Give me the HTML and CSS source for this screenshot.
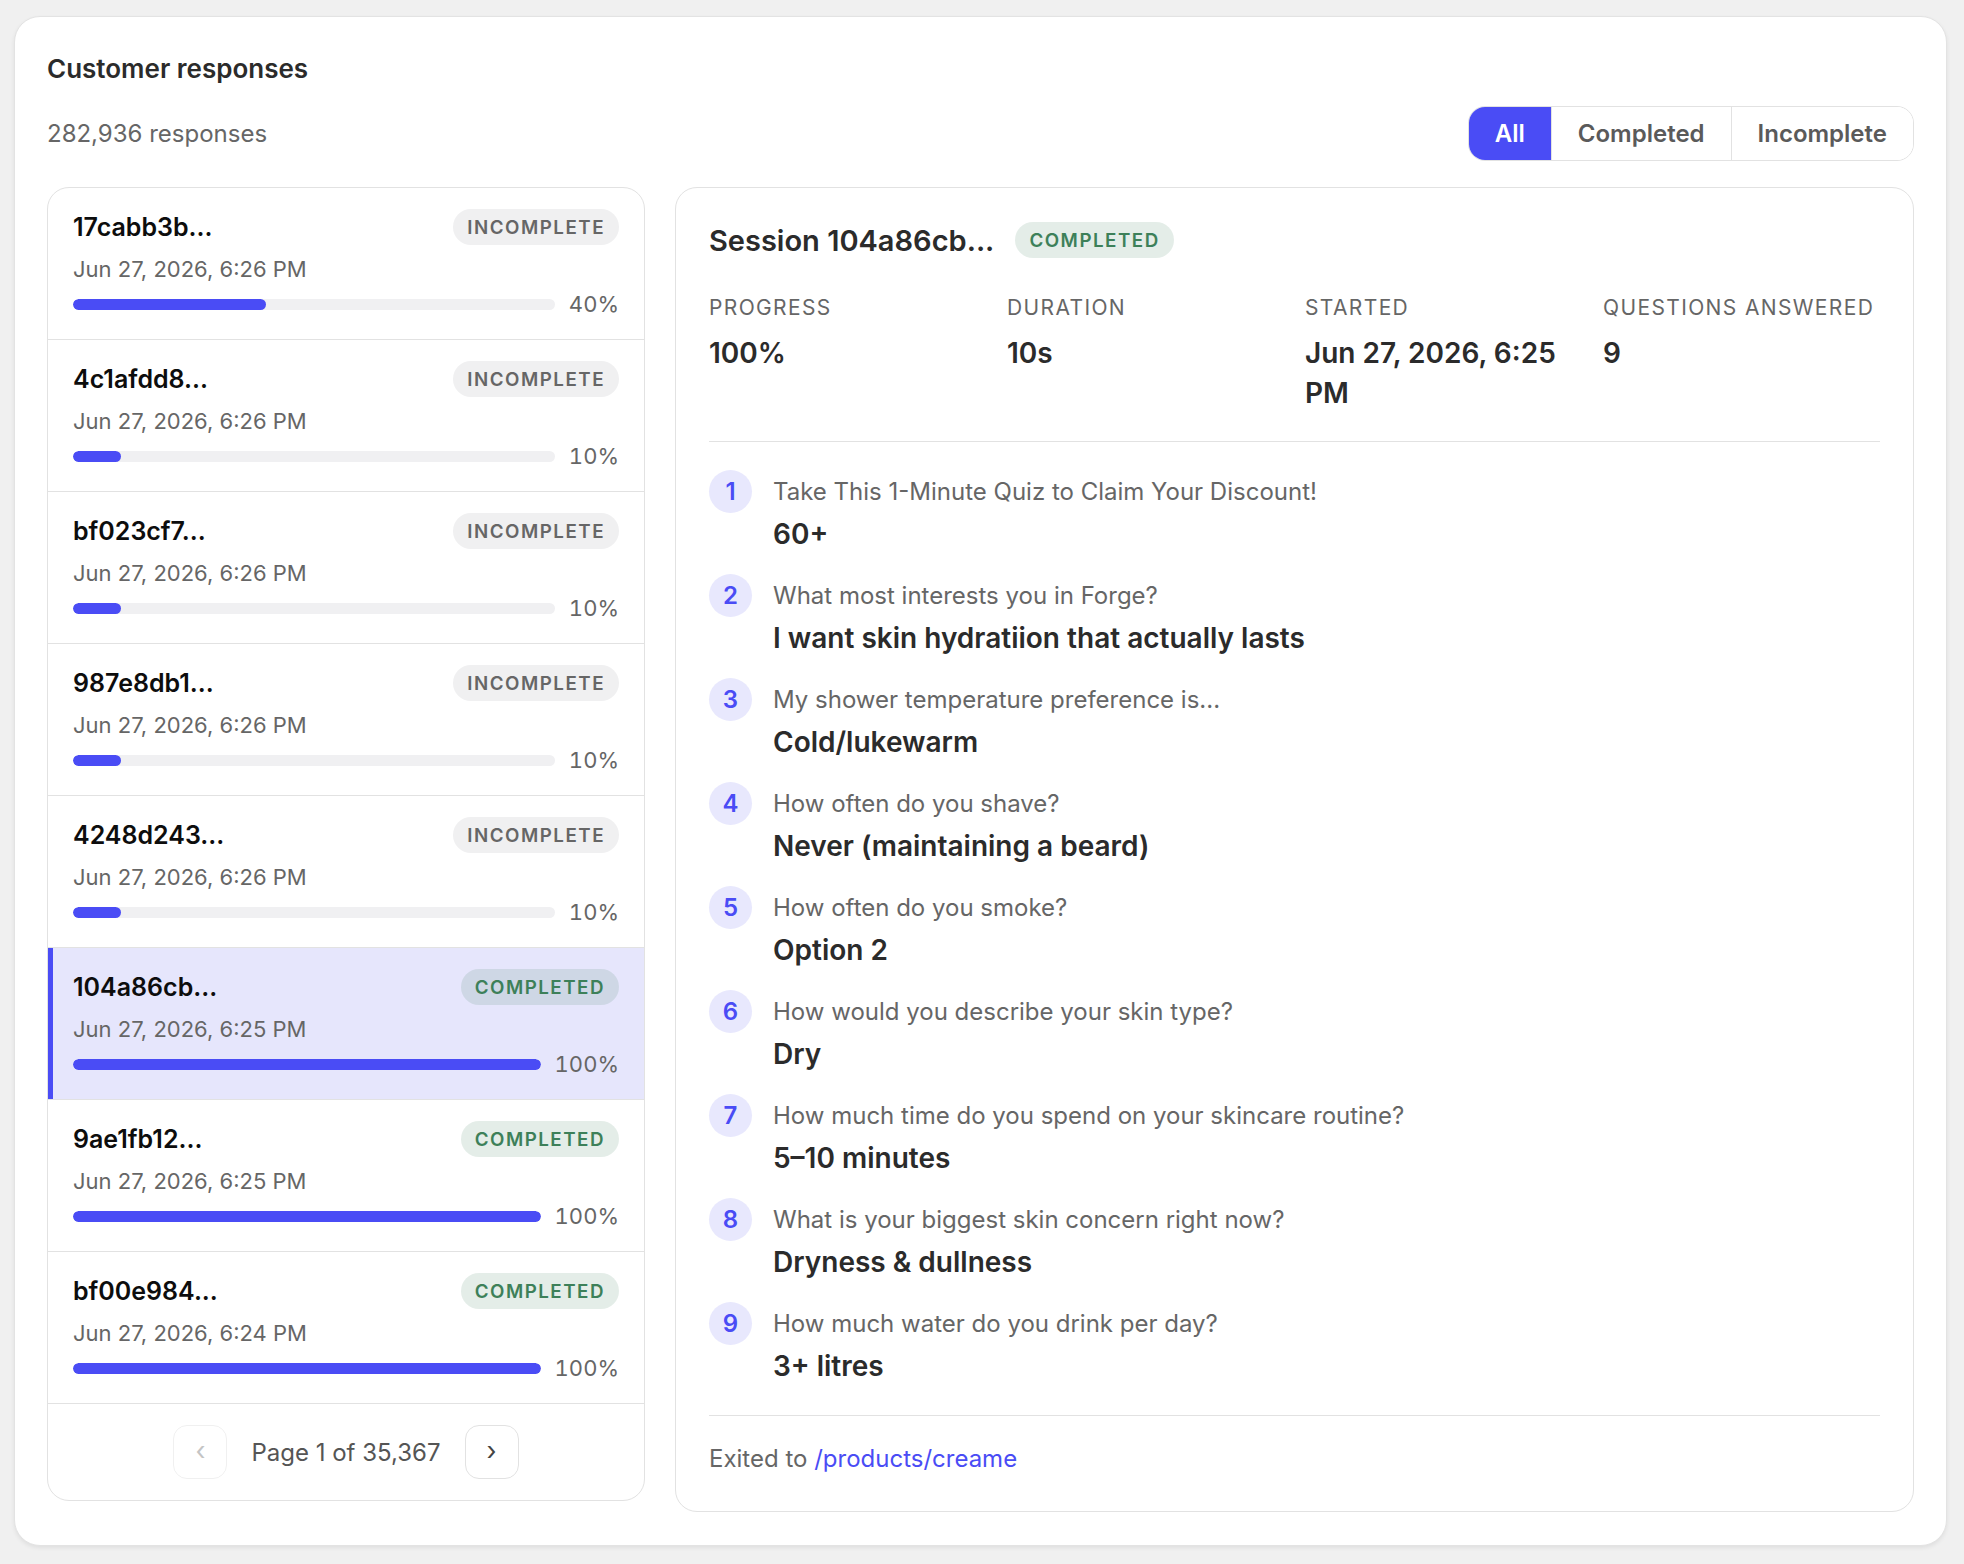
FILE: index.html
```html
<!DOCTYPE html>
<html lang="en">
<head>
<meta charset="utf-8">
<title>Customer responses</title>
<link rel="stylesheet" href="styles.css">
</head>
<body>
<div class="card">
  <h1 class="title">Customer responses</h1>
  <div class="toolbar">
    <div class="count">282,936 responses</div>
    <div class="segmented">
      <button class="seg active">All</button>
      <button class="seg">Completed</button>
      <button class="seg">Incomplete</button>
    </div>
  </div>
  <div class="main">
    <div class="list">
      <div class="row">
        <div class="row-head"><span class="rid">17cabb3b...</span><span class="badge incomplete">Incomplete</span></div>
        <div class="rdate">Jun 27, 2026, 6:26 PM</div>
        <div class="prog"><div class="track"><div class="fill" style="width:40%"></div></div><span class="pct">40%</span></div>
      </div>
      <div class="row">
        <div class="row-head"><span class="rid">4c1afdd8...</span><span class="badge incomplete">Incomplete</span></div>
        <div class="rdate">Jun 27, 2026, 6:26 PM</div>
        <div class="prog"><div class="track"><div class="fill" style="width:10%"></div></div><span class="pct">10%</span></div>
      </div>
      <div class="row">
        <div class="row-head"><span class="rid">bf023cf7...</span><span class="badge incomplete">Incomplete</span></div>
        <div class="rdate">Jun 27, 2026, 6:26 PM</div>
        <div class="prog"><div class="track"><div class="fill" style="width:10%"></div></div><span class="pct">10%</span></div>
      </div>
      <div class="row">
        <div class="row-head"><span class="rid">987e8db1...</span><span class="badge incomplete">Incomplete</span></div>
        <div class="rdate">Jun 27, 2026, 6:26 PM</div>
        <div class="prog"><div class="track"><div class="fill" style="width:10%"></div></div><span class="pct">10%</span></div>
      </div>
      <div class="row">
        <div class="row-head"><span class="rid">4248d243...</span><span class="badge incomplete">Incomplete</span></div>
        <div class="rdate">Jun 27, 2026, 6:26 PM</div>
        <div class="prog"><div class="track"><div class="fill" style="width:10%"></div></div><span class="pct">10%</span></div>
      </div>
      <div class="row selected">
        <div class="row-head"><span class="rid">104a86cb...</span><span class="badge completed">Completed</span></div>
        <div class="rdate">Jun 27, 2026, 6:25 PM</div>
        <div class="prog"><div class="track"><div class="fill" style="width:100%"></div></div><span class="pct">100%</span></div>
      </div>
      <div class="row">
        <div class="row-head"><span class="rid">9ae1fb12...</span><span class="badge completed">Completed</span></div>
        <div class="rdate">Jun 27, 2026, 6:25 PM</div>
        <div class="prog"><div class="track"><div class="fill" style="width:100%"></div></div><span class="pct">100%</span></div>
      </div>
      <div class="row">
        <div class="row-head"><span class="rid">bf00e984...</span><span class="badge completed">Completed</span></div>
        <div class="rdate">Jun 27, 2026, 6:24 PM</div>
        <div class="prog"><div class="track"><div class="fill" style="width:100%"></div></div><span class="pct">100%</span></div>
      </div>
      <div class="pager">
        <button class="pbtn disabled">‹</button>
        <span class="ptext">Page 1 of 35,367</span>
        <button class="pbtn">›</button>
      </div>
    </div>

    <div class="detail">
      <div class="dhead">
        <h2 class="session">Session 104a86cb...</h2>
        <span class="badge completed">Completed</span>
      </div>
      <div class="stats">
        <div class="stat"><div class="slabel">Progress</div><div class="svalue">100%</div></div>
        <div class="stat"><div class="slabel">Duration</div><div class="svalue">10s</div></div>
        <div class="stat"><div class="slabel">Started</div><div class="svalue">Jun 27, 2026, 6:25 PM</div></div>
        <div class="stat"><div class="slabel">Questions answered</div><div class="svalue">9</div></div>
      </div>
      <ol class="qlist">
        <li class="q"><span class="qnum">1</span><div class="qbody"><div class="qtext">Take This 1-Minute Quiz to Claim Your Discount!</div><div class="qans">60+</div></div></li>
        <li class="q"><span class="qnum">2</span><div class="qbody"><div class="qtext">What most interests you in Forge?</div><div class="qans">I want skin hydratiion that actually lasts</div></div></li>
        <li class="q"><span class="qnum">3</span><div class="qbody"><div class="qtext">My shower temperature preference is...</div><div class="qans">Cold/lukewarm</div></div></li>
        <li class="q"><span class="qnum">4</span><div class="qbody"><div class="qtext">How often do you shave?</div><div class="qans">Never (maintaining a beard)</div></div></li>
        <li class="q"><span class="qnum">5</span><div class="qbody"><div class="qtext">How often do you smoke?</div><div class="qans">Option 2</div></div></li>
        <li class="q"><span class="qnum">6</span><div class="qbody"><div class="qtext">How would you describe your skin type?</div><div class="qans">Dry</div></div></li>
        <li class="q"><span class="qnum">7</span><div class="qbody"><div class="qtext">How much time do you spend on your skincare routine?</div><div class="qans">5–10 minutes</div></div></li>
        <li class="q"><span class="qnum">8</span><div class="qbody"><div class="qtext">What is your biggest skin concern right now?</div><div class="qans">Dryness &amp; dullness</div></div></li>
        <li class="q"><span class="qnum">9</span><div class="qbody"><div class="qtext">How much water do you drink per day?</div><div class="qans">3+ litres</div></div></li>
      </ol>
      <div class="exit">Exited to <a class="exit-link" href="#">/products/creame</a></div>
    </div>
  </div>
</div>
</body>
</html>
```

FILE: styles.css
```css
* { box-sizing: border-box; }

body {
  margin: 0;
  padding: 16px 17px 17px 14px;
  background: #f0f0f0;
  font-family: Inter, "Noto Sans", "Liberation Sans", sans-serif;
  color: #2b2b2b;
}

.card {
  background: #fff;
  border: 1px solid #e3e3e3;
  border-radius: 26px;
  padding: 36px 32px 33px 32px;
  box-shadow: 0 2px 4px rgba(0, 0, 0, 0.07);
}

.title {
  margin: 0;
  font-size: 26px;
  line-height: 32px;
  font-weight: 600;
  color: #2b2b2b;
}

.toolbar {
  margin-top: 21px;
  display: flex;
  justify-content: space-between;
  align-items: center;
}

.count {
  font-size: 24px;
  color: #666;
}

.segmented {
  display: flex;
  height: 55px;
  border: 1px solid #e2e2e2;
  border-radius: 17px;
  overflow: hidden;
}

.seg {
  border: 0;
  border-left: 1px solid #e2e2e2;
  background: #fff;
  padding: 0 26px;
  font-family: inherit;
  font-size: 24px;
  font-weight: 600;
  color: #5a5a5a;
}

.seg:first-child { border-left: 0; }

.seg.active {
  background: #4a4cf5;
  color: #fff;
}

.main {
  margin-top: 26px;
  display: flex;
  align-items: flex-start;
  gap: 30px;
}

.list {
  width: 598px;
  flex-shrink: 0;
  border: 1px solid #e2e2e2;
  border-radius: 22px;
  overflow: hidden;
}

.row {
  padding: 21px 25px 20px 25px;
  border-bottom: 1px solid #e2e2e2;
}

.row.selected {
  background: #e6e6fc;
  box-shadow: inset 5px 0 0 #4a4cf5;
}

.row-head {
  display: flex;
  justify-content: space-between;
  align-items: center;
  height: 36px;
}

.rid {
  font-size: 25px;
  font-weight: 600;
  color: #0d0d0d;
}

.badge {
  display: inline-flex;
  align-items: center;
  height: 36px;
  padding: 0 14px;
  border-radius: 18px;
  font-size: 18.75px;
  font-weight: 600;
  letter-spacing: 0.08em;
  text-transform: uppercase;
}

.badge.incomplete {
  background: #f0f0f1;
  color: #666;
}

.badge.completed {
  background: rgba(61, 128, 89, 0.14);
  color: #3d8059;
}

.rdate {
  margin-top: 10px;
  font-size: 22px;
  line-height: 28px;
  color: #666;
}

.prog {
  margin-top: 6px;
  display: flex;
  align-items: center;
  gap: 14px;
  height: 30px;
}

.track {
  flex: 1;
  height: 11px;
  border-radius: 6px;
  background: #f0f0f2;
  overflow: hidden;
}

.fill {
  height: 100%;
  border-radius: 6px;
  background: #4a4cf5;
}

.pct {
  font-size: 22px;
  line-height: 30px;
  color: #666;
  font-variant-numeric: tabular-nums;
}

.pager {
  display: flex;
  justify-content: center;
  align-items: center;
  gap: 24px;
  padding: 21px 0;
}

.pbtn {
  width: 54px;
  height: 54px;
  border: 1px solid #e2e2e2;
  border-radius: 14px;
  background: #fff;
  font-family: inherit;
  font-size: 26px;
  color: #444;
  padding: 0 0 3px;
}

.pbtn.disabled {
  border-color: #f0f0f0;
  color: #c4c4c4;
}

.ptext {
  font-size: 24px;
  color: #555;
}

.detail {
  flex: 1;
  border: 1px solid #e2e2e2;
  border-radius: 22px;
  padding: 34px 33px 37px 33px;
}

.dhead {
  display: flex;
  align-items: center;
  gap: 21px;
  height: 36px;
}

.session {
  margin: 0;
  font-size: 29px;
  font-weight: 600;
  color: #2b2b2b;
}

.stats {
  margin-top: 37px;
  display: grid;
  grid-template-columns: repeat(4, 1fr);
  gap: 21px;
  padding-bottom: 28px;
  border-bottom: 1px solid #e2e2e2;
}

.slabel {
  font-size: 21px;
  line-height: 25px;
  letter-spacing: 0.065em;
  text-transform: uppercase;
  color: #666;
}

.svalue {
  margin-top: 12.5px;
  font-size: 28px;
  line-height: 40px;
  font-weight: 600;
  color: #2b2b2b;
}

.qlist {
  list-style: none;
  margin: 0;
  padding: 28px 0 32px;
  display: flex;
  flex-direction: column;
  gap: 23px;
  border-bottom: 1px solid #e2e2e2;
}

.q {
  display: flex;
  gap: 21px;
}

.qnum {
  flex-shrink: 0;
  width: 43px;
  height: 43px;
  border-radius: 50%;
  background: #e8e8fd;
  color: #4a4cf5;
  font-size: 24px;
  font-weight: 600;
  display: flex;
  align-items: center;
  justify-content: center;
}

.qtext {
  font-size: 24px;
  line-height: 43px;
  color: #666;
}

.qans {
  margin-top: 4px;
  font-size: 28px;
  line-height: 34px;
  font-weight: 600;
  color: #2b2b2b;
}

.exit {
  padding-top: 28px;
  font-size: 24px;
  line-height: 30px;
  color: #666;
}

.exit-link {
  color: #4a4cf5;
  text-decoration: none;
}
```
